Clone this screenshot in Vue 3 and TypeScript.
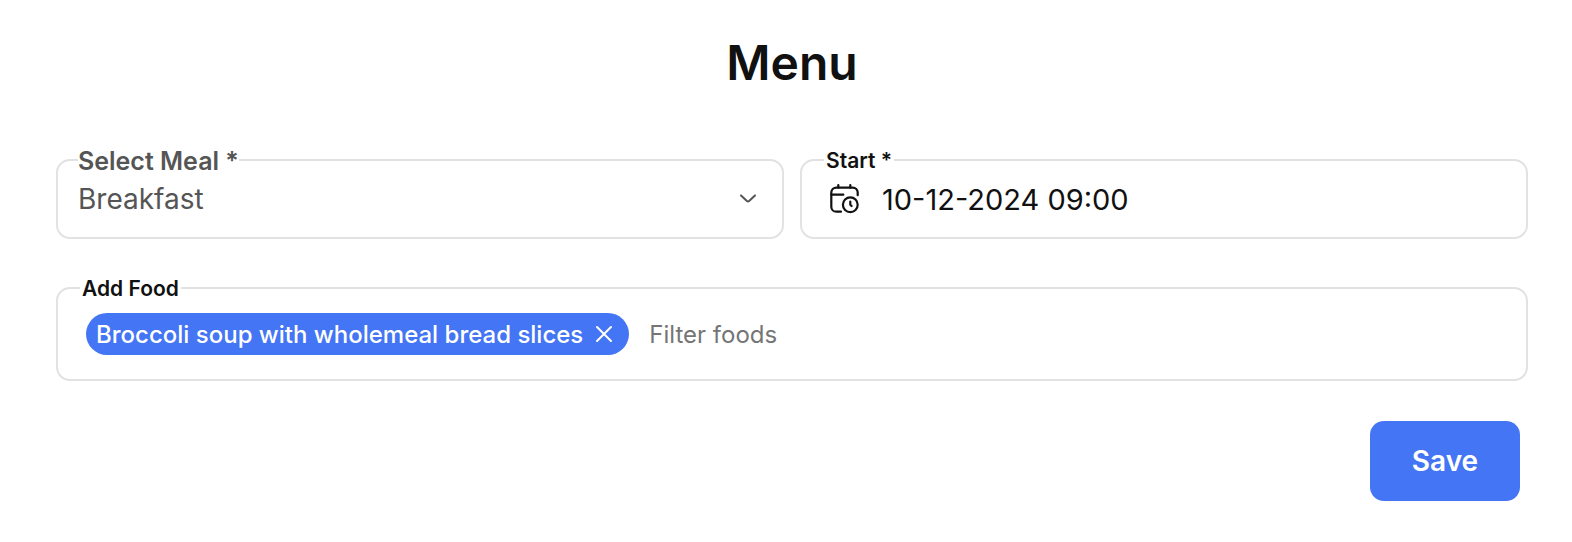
<script setup lang="ts">
import { ref } from 'vue'

const meals: string[] = ['Breakfast', 'Lunch', 'Dinner', 'Snack']
const meal = ref<string>('Breakfast')
const start = ref<string>('10-12-2024 09:00')
const foods = ref<string[]>(['Broccoli soup with wholemeal bread slices'])
const filter = ref<string>('')

function removeFood(food: string): void {
  foods.value = foods.value.filter((item) => item !== food)
}
</script>

<template>
  <main class="page">
    <h1 class="title">Menu</h1>
    <form class="form" @submit.prevent>
      <div class="row">
        <div class="field">
          <label class="label label-large" for="meal">Select Meal *</label>
          <select id="meal" v-model="meal" class="control muted">
            <option v-for="name in meals" :key="name" :value="name">{{ name }}</option>
          </select>
          <svg class="chevron" viewBox="0 0 20 12" aria-hidden="true">
            <path d="M3 2.4 L8.9 8 Q10 9 11.1 8 L17 2.4" />
          </svg>
        </div>
        <div class="field">
          <label class="label" for="start">Start *</label>
          <svg class="calendar" viewBox="0 0 32 32" aria-hidden="true">
            <path d="M13 28.7 H8.3 A5 5 0 0 1 3.3 23.7 V9.6 A5 5 0 0 1 8.3 4.6 H24.7 A5 5 0 0 1 29.7 9.6 V12.2" />
            <path d="M10.3 2 V4.6 M22.3 2 V4.6 M3.3 11.7 H15.3" />
            <circle cx="22.3" cy="21.7" r="7.4" />
            <path d="M22.3 18.7 V21.7 L23.6 23" />
          </svg>
          <input id="start" v-model="start" class="control date" type="text" />
        </div>
      </div>
      <div class="field foods">
        <label class="label" for="food-filter">Add Food</label>
        <span v-for="food in foods" :key="food" class="chip">
          {{ food }}
          <button class="remove" type="button" :aria-label="`Remove ${food}`" @click="removeFood(food)">
            <svg viewBox="0 0 18 18" aria-hidden="true"><path d="M2 2 L16 16 M16 2 L2 16" /></svg>
          </button>
        </span>
        <input id="food-filter" v-model="filter" class="control filter" type="text" placeholder="Filter foods" />
      </div>
      <button class="save" type="submit">Save</button>
    </form>
  </main>
</template>

<style>
body {
  margin: 0;
  background: #fff;
}
</style>

<style scoped>
.page {
  padding: 31px 44px 40px 56px;
  font-family: Inter, "Liberation Sans", sans-serif;
  color: #111;
}
.title {
  margin: 0 0 64px;
  font-size: 48px;
  line-height: 64px;
  font-weight: 600;
  text-align: center;
}
.form {
  display: flex;
  flex-direction: column;
}
.row {
  display: grid;
  grid-template-columns: 1fr 1fr;
  gap: 16px;
  margin-bottom: 48px;
}
.field {
  position: relative;
  display: flex;
  align-items: center;
  box-sizing: border-box;
  min-width: 0;
  height: 80px;
  border: 2px solid #e2e2e2;
  border-radius: 14px;
}
.label {
  position: absolute;
  left: 22px;
  top: -12px;
  padding: 0 2px;
  background: #fff;
  font-size: 21px;
  line-height: 24px;
  font-weight: 600;
}
.label-large {
  left: 20px;
  padding: 0;
  font-size: 25px;
  color: #555;
}
.control {
  flex: 1;
  min-width: 0;
  height: 76px;
  margin: 0;
  padding: 0 20px;
  border: 0;
  outline: 0;
  background: none;
  color: inherit;
  font: inherit;
  font-size: 28px;
  border-radius: 12px;
}
.muted {
  appearance: none;
  color: #555;
}
.date {
  padding: 0 22px;
  font-size: 29px;
}
.chevron {
  position: absolute;
  right: 24px;
  width: 20px;
  height: 12px;
  pointer-events: none;
}
.chevron path {
  fill: none;
  stroke: #555;
  stroke-width: 2;
  stroke-linecap: round;
}
.calendar {
  flex: none;
  width: 32px;
  height: 32px;
  margin-left: 26px;
}
.calendar path,
.calendar circle {
  fill: none;
  stroke: #111;
  stroke-width: 2.2;
  stroke-linecap: round;
  stroke-linejoin: round;
}
.foods {
  height: 94px;
  padding-left: 28px;
}
.chip {
  display: flex;
  align-items: center;
  gap: 12px;
  height: 42px;
  padding: 0 16px 0 10px;
  border-radius: 21px;
  background: #4475f5;
  color: #fff;
  font-size: 24px;
  font-weight: 500;
  white-space: nowrap;
}
.remove {
  display: flex;
  padding: 0;
  border: 0;
  background: none;
  cursor: pointer;
}
.remove svg {
  width: 18px;
  height: 18px;
}
.remove path {
  stroke: #fff;
  stroke-width: 2;
  stroke-linecap: round;
}
.filter {
  height: 42px;
  padding: 0 20px;
  font-size: 24px;
}
.filter::placeholder {
  color: #757575;
  opacity: 1;
}
.save {
  align-self: flex-end;
  min-width: 150px;
  height: 80px;
  margin: 40px 8px 0 0;
  border: 0;
  border-radius: 14px;
  background: #4475f5;
  color: #fff;
  font: inherit;
  font-size: 28px;
  font-weight: 600;
  cursor: pointer;
}
</style>
